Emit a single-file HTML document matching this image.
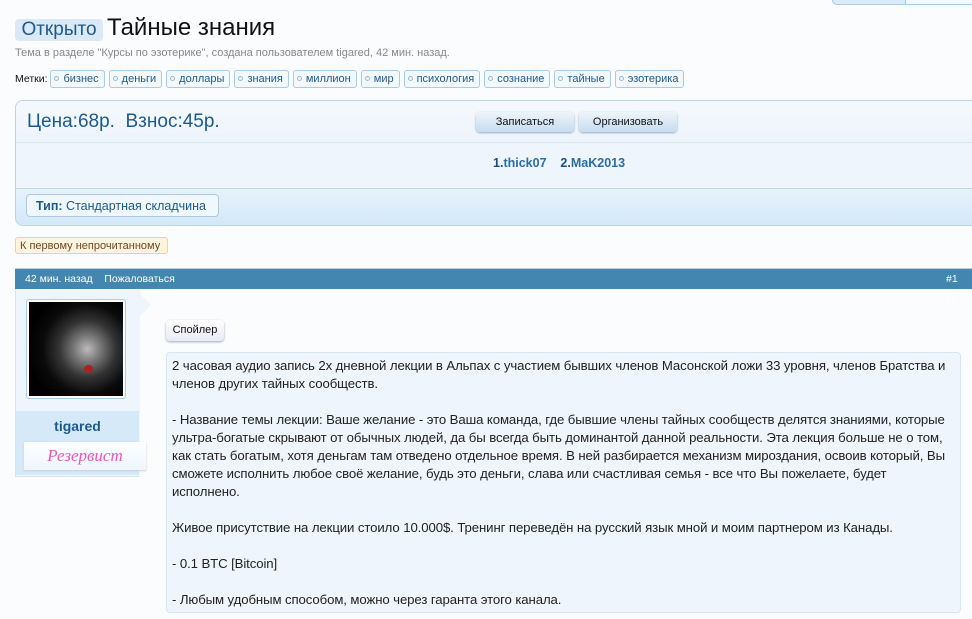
<!DOCTYPE html>
<html><head><meta charset="utf-8"><style>
body{margin:0;width:972px;height:619px;overflow:hidden;background:#fbfcfe;font-family:"Liberation Sans",sans-serif;position:relative}
.a{position:absolute}
.tag{display:inline-block;border:1px solid #a9cbe6;border-radius:3px;background:#f3f8fd;color:#1f5a8a;font-size:11px;padding:1px 5px 1px 12px;margin-right:4px;position:relative;height:14px;line-height:14px}
.tag:before{content:"";position:absolute;left:3px;top:5px;width:3px;height:3px;border:1px solid #9bbbd6;border-radius:50%}
.btn{position:absolute;height:20px;border-radius:4px;background:linear-gradient(#eef5fb,#c6dcef);box-shadow:0 1px 2px #9ab;font-size:11px;line-height:20px;text-align:center;color:#111}
.txt{font-size:13.2px;line-height:18px;color:#222;white-space:nowrap;letter-spacing:-0.1px}
</style></head><body>
<div class="a" style="left:832px;top:0;width:140px;height:4px;border:1px solid #a9cbe6;border-top:0;border-radius:0 0 0 5px;background:#d9eaf8"></div>
<div class="a" style="left:905px;top:0;width:67px;height:4px;background:#f5f9fd;border-left:1px solid #a9cbe6;border-bottom:1px solid #a9cbe6"></div>
<div class="a" style="left:15px;top:19px;width:88px;height:22px;background:#dbe9f7;border-radius:4px;color:#1d5a8c;font-size:19px;line-height:22px;text-align:center">Открыто</div>
<div class="a" style="left:107px;top:14px;font-size:24px;color:#111">Тайные знания</div>
<div class="a" style="left:15px;top:47px;font-size:11px;color:#888">Тема в разделе "Курсы по эзотерике", создана пользователем tigared, 42 мин. назад.</div>
<div class="a" style="left:15px;top:70px;font-size:10.5px;color:#111;white-space:nowrap">Метки: <span class="tag">бизнес</span><span class="tag">деньги</span><span class="tag">доллары</span><span class="tag">знания</span><span class="tag">миллион</span><span class="tag">мир</span><span class="tag">психология</span><span class="tag">сознание</span><span class="tag">тайные</span><span class="tag">эзотерика</span></div>
<div class="a" style="left:15px;top:100px;width:970px;height:124px;border:1px solid #bcd3e3;border-radius:8px 0 0 8px;background:#eef5fc;overflow:hidden">
 <div style="height:41px;background:linear-gradient(#f5f9fd,#edf4fc);border-bottom:1px solid #d6e5f0"></div>
 <div style="height:45px;border-bottom:1px solid #c2d5e2"></div>
 <div style="height:37px;background:linear-gradient(#e6f2fb,#d3e8f8)"></div>
</div>
<div class="a" style="left:27px;top:111px;font-size:19px;color:#1d5a8c">Цена:68р.&nbsp; Взнос:45р.</div>
<div class="btn" style="left:476px;top:112px;width:98px">Записаться</div>
<div class="btn" style="left:579px;top:112px;width:98px">Организовать</div>
<div class="a" style="left:493px;top:156px;font-size:12.5px;font-weight:bold;color:#1d4f7a">1.<span style="color:#2a6da3">thick07</span>&nbsp;&nbsp;&nbsp; 2.<span style="color:#2a6da3">MaK2013</span></div>
<div class="a" style="left:26px;top:194px;height:23px;border:1px solid #a9cbe6;border-radius:4px;background:#f0f7fd;font-size:12.5px;line-height:23px;color:#1d5a8c;padding-left:9px;box-sizing:border-box;width:193px"><b>Тип:</b> Стандартная складчина</div>
<div class="a" style="left:15px;top:237px;width:153px;height:17px;border:1px solid #f4cfa0;border-radius:3px;background:#fff4e0;font-size:11px;line-height:17px;color:#6b4a22;padding-left:4px;box-sizing:border-box">К первому непрочитанному</div>
<div class="a" style="left:15px;top:268px;width:957px;height:20px;background:#4387b0;border-top:1px solid #c0ccd6;font-size:10.5px;line-height:20px;color:#fff"><span style="margin-left:10px">42 мин. назад</span>&nbsp;&nbsp;&nbsp; Пожаловаться<span style="position:absolute;left:931px">#1&nbsp;&nbsp; M</span></div>
<div class="a" style="left:15px;top:289px;width:124px;height:187px;background:#eef5fc;border-left:1px solid #d6e5f0;border-bottom:1px solid #d6e5f0"></div>
<div class="a" style="left:139px;top:293px;width:0;height:0;border:12px solid transparent;border-left-color:#eef5fc;border-right:0"></div>
<div class="a" style="left:16px;top:411px;width:123px;height:64px;background:#d5e9f8"></div>
<div class="a" style="left:26px;top:299px;width:100px;height:100px;border:1px solid #a9cbe6;border-radius:3px;background:#fff;padding:2px;box-sizing:border-box">
<div style="width:100%;height:100%;background:radial-gradient(circle at 62% 50%,#bbb 0,#777 18%,#333 38%,#0a0a0a 60%,#000 80%);position:relative"><div style="position:absolute;left:55px;top:63px;width:9px;height:8px;border-radius:50%;background:#a22"></div></div></div>
<div class="a" style="left:16px;top:418px;width:123px;text-align:center;font-size:14px;font-weight:bold;color:#1d5a8c">tigared</div>
<div class="a" style="left:24px;top:442px;width:122px;height:28px;background:linear-gradient(#fff,#eef5fc);box-shadow:0 1px 2px #ccd;text-align:center;font-family:'Liberation Serif',serif;font-style:italic;font-size:17px;line-height:28px;color:#e05ab8">Резервист</div>
<div class="btn" style="left:166px;top:320px;width:58px;height:21px;background:linear-gradient(#fff,#e8eaf4);font-size:11px">Спойлер</div>
<div class="a txt" style="left:166px;top:352px;width:795px;height:261px;border:1px solid #d3e6f6;border-radius:4px;background:#eef5fc;padding:4px 0 0 5px;box-sizing:border-box">2 часовая аудио запись 2х дневной лекции в Альпах с участием бывших членов Масонской ложи 33 уровня, членов Братства и<br>членов других тайных сообществ.<br><br>- Название темы лекции: Ваше желание - это Ваша команда, где бывшие члены тайных сообществ делятся знаниями, которые<br>ультра-богатые скрывают от обычных людей, да бы всегда быть доминантой данной реальности. Эта лекция больше не о том,<br>как стать богатым, хотя деньгам там отведено отдельное время. В ней разбирается механизм мироздания, освоив который, Вы<br>сможете исполнить любое своё желание, будь это деньги, слава или счастливая семья - все что Вы пожелаете, будет<br>исполнено.<br><br>Живое присутствие на лекции стоило 10.000$. Тренинг переведён на русский язык мной и моим партнером из Канады.<br><br>- 0.1 BTC [Bitcoin]<br><br>- Любым удобным способом, можно через гаранта этого канала.</div>
</body></html>
